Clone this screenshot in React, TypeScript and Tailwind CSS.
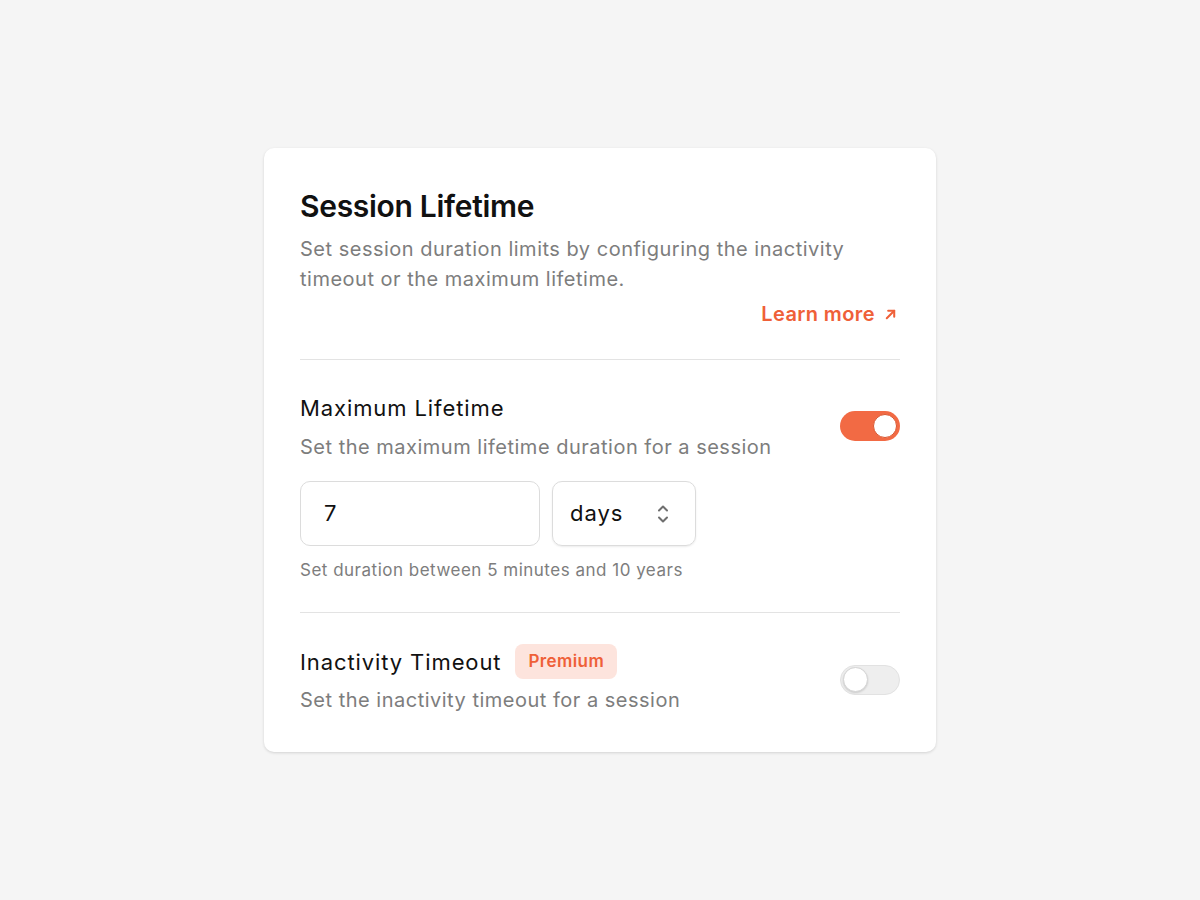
function Toggle({ on }: { on: boolean }) {
  return (
    <div
      className={
        on
          ? "mb-[3px] flex h-[30px] w-[60px] shrink-0 items-center justify-end rounded-full bg-[#f26a44] px-[3px]"
          : "flex h-[30px] w-[60px] shrink-0 items-center justify-start rounded-full border border-[#e2e2e2] bg-[#eeeeee] px-[2px]"
      }
    >
      <div
        className={
          on
            ? "h-[24px] w-[24px] rounded-full border border-[#d9562f] bg-white"
            : "h-[25px] w-[25px] rounded-full border border-[#d4d4d4] bg-white shadow-[0_1px_2px_rgba(0,0,0,0.15)]"
        }
      />
    </div>
  );
}

export default function App() {
  return (
    <div
      className="flex min-h-[900px] w-full items-start justify-center bg-[#f5f5f5] pt-[148px]"
      style={{ fontFamily: "Inter, 'Noto Sans', sans-serif" }}
    >
      <div className="w-[672px] rounded-[10px] bg-white px-[36px] pb-[37px] pt-[40px] shadow-[0_1px_3px_rgba(0,0,0,0.14)]">
        <h1 className="text-[30px] font-semibold leading-[36px] tracking-[-0.3px] text-[#111111]">
          Session Lifetime
        </h1>
        <p className="mt-[10px] text-[20px] leading-[30px] tracking-[0.5px] text-[#7d7d7d]">
          Set session duration limits by configuring the inactivity
          <br />
          timeout or the maximum lifetime.
        </p>
        <div className="mt-[6px] flex justify-end pr-[3px]">
          <a className="flex items-center gap-[9px] text-[20px] font-semibold leading-[28px] tracking-[0.4px] text-[#ef6038]">
            Learn more
            <svg width="13" height="13" viewBox="0 0 14 14" fill="none" stroke="currentColor" strokeWidth="2.2" strokeLinecap="round" strokeLinejoin="round">
              <path d="M3 11L11 3" />
              <path d="M4.5 3H11V9.5" />
            </svg>
          </a>
        </div>

        <div className="mt-[31px] h-px bg-[#e3e3e3]" />

        <div className="mt-[33px] flex items-center justify-between">
          <div>
            <div className="text-[22px] leading-[30px] tracking-[0.9px] text-[#111111]">Maximum Lifetime</div>
            <div className="mt-[9px] text-[20px] leading-[30px] tracking-[0.5px] text-[#7d7d7d]">
              Set the maximum lifetime duration for a session
            </div>
          </div>
          <Toggle on />
        </div>

        <div className="mt-[19px] flex gap-[12px]">
          <div className="flex h-[65px] w-[240px] items-center rounded-[10px] border border-[#dcdcdc] px-[23px] text-[22px] text-[#111111]">
            7
          </div>
          <div className="flex h-[65px] w-[144px] items-center justify-between rounded-[10px] border border-[#dcdcdc] pl-[17px] pr-[26px] text-[22px] tracking-[1px] text-[#111111] shadow-[0_1px_2px_rgba(0,0,0,0.08)]">
            days
            <svg width="12" height="24" viewBox="0 0 12 24" fill="none" stroke="#6f6f6f" strokeWidth="2" strokeLinecap="round" strokeLinejoin="round">
              <path d="M2 8.5L6 4.5L10 8.5" />
              <path d="M2 15.5L6 19.5L10 15.5" />
            </svg>
          </div>
        </div>
        <div className="mt-[12px] text-[17px] leading-[24px] tracking-[0.5px] text-[#7d7d7d]">
          Set duration between 5 minutes and 10 years
        </div>

        <div className="mt-[30px] h-px bg-[#e3e3e3]" />

        <div className="mt-[31px] flex items-center justify-between">
          <div>
            <div className="flex items-center gap-[14px]">
              <span className="text-[22px] leading-[30px] tracking-[0.9px] text-[#111111]">Inactivity Timeout</span>
              <span className="flex h-[35px] items-center rounded-[8px] bg-[#fde4dd] px-[13px] text-[17px] font-semibold tracking-[0.4px] text-[#ef6038]">
                Premium
              </span>
            </div>
            <div className="mt-[6px] text-[20px] leading-[30px] tracking-[0.5px] text-[#7d7d7d]">
              Set the inactivity timeout for a session
            </div>
          </div>
          <Toggle on={false} />
        </div>
      </div>
    </div>
  );
}
